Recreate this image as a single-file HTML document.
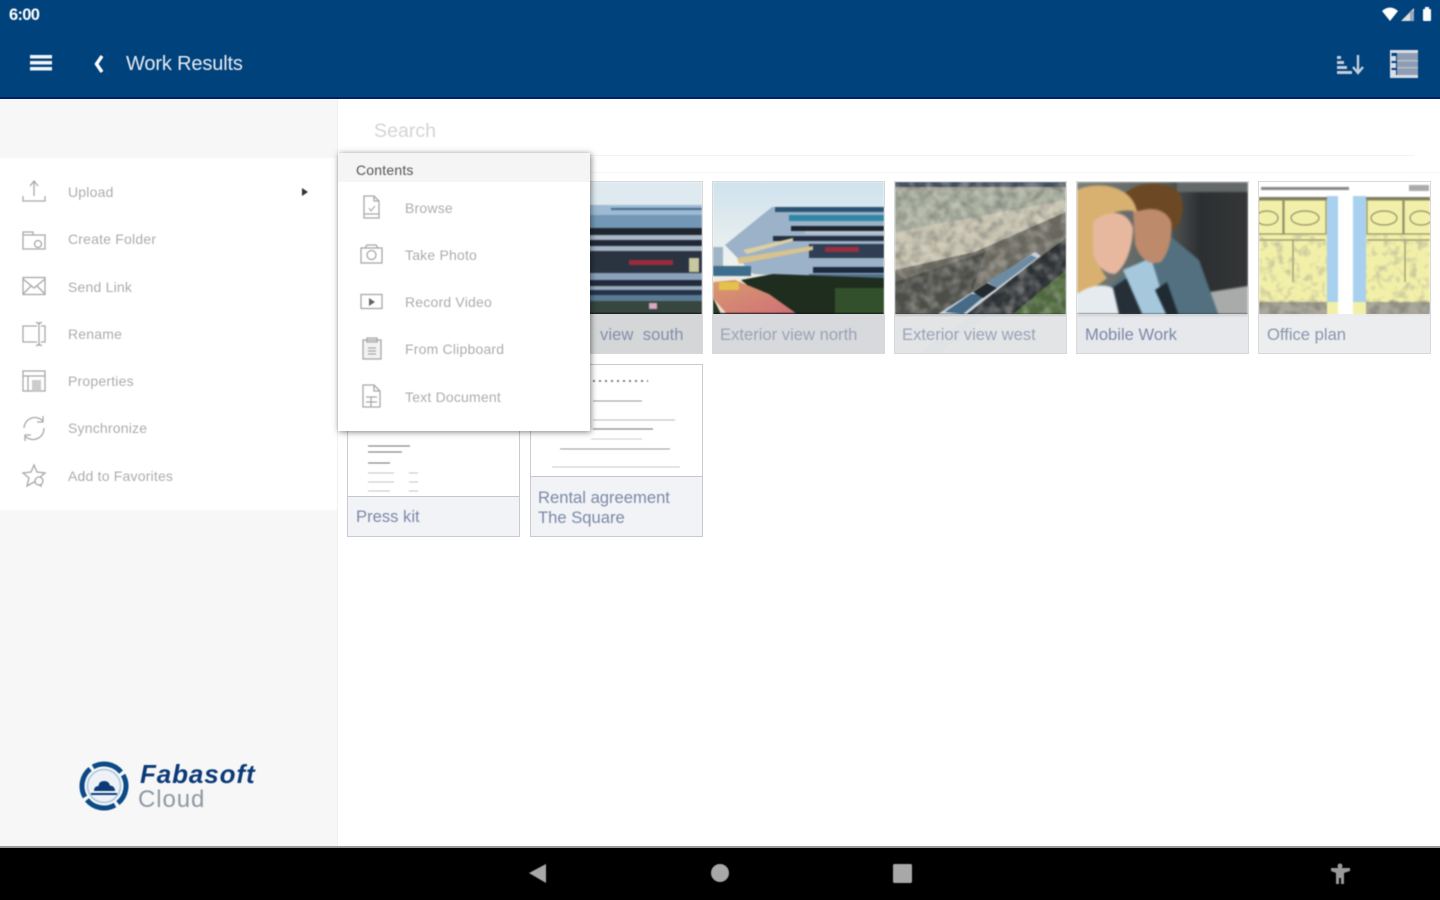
<!DOCTYPE html>
<html><head><meta charset="utf-8"><style>
html,body{margin:0;padding:0;width:1440px;height:900px;overflow:hidden;background:#fff;font-family:"Liberation Sans",sans-serif}
.a{position:absolute}
.t{position:absolute;white-space:nowrap;filter:blur(.5px)}
.m{font-size:14px;color:#adadad;line-height:16px;letter-spacing:.2px}
.c{font-size:16.6px;color:#7c89a8;line-height:20px;filter:blur(.55px)}
.card{position:absolute;width:171px;height:171px;border:1px solid #d6d8da;background:#fff;overflow:hidden}
.cap{position:absolute;left:0;right:0;bottom:0;height:39px;background:rgba(232,234,236,.86)}
svg{position:absolute;left:0;top:0;overflow:visible}
</style></head><body>
<svg width="0" height="0"><defs>
<filter id="nd" x="0" y="0" width="100%" height="100%"><feTurbulence type="fractalNoise" baseFrequency=".1" numOctaves="2" seed="7"/><feColorMatrix values="0 0 0 0 .1  0 0 0 0 .1  0 0 0 0 .1  2.6 0 0 0 -1"/></filter>
<filter id="nl" x="0" y="0" width="100%" height="100%"><feTurbulence type="fractalNoise" baseFrequency=".09" numOctaves="2" seed="21"/><feColorMatrix values="0 0 0 0 .9  0 0 0 0 .88  0 0 0 0 .8  2.6 0 0 0 -1"/></filter>
<filter id="np" x="0" y="0" width="100%" height="100%"><feTurbulence type="fractalNoise" baseFrequency=".12" numOctaves="2" seed="4"/><feColorMatrix values="0 0 0 0 .42  0 0 0 0 .42  0 0 0 0 .3  3 0 0 0 -1.4"/></filter>
</defs></svg>
<div class="a" style="left:0;top:0;width:1440px;height:97px;background:#00427c"></div>
<div class="a" style="left:0;top:97px;width:1440px;height:2px;background:#001f66"></div>
<div class="a" style="left:0;top:99px;width:337px;height:748px;background:#f7f7f7"></div>
<div class="a" style="left:0;top:158px;width:337px;height:352px;background:#fff"></div>
<div class="a" style="left:337px;top:99px;width:1px;height:748px;background:#f0f0f0"></div>
<div class="a" style="left:0;top:847px;width:1440px;height:53px;background:#000"></div>
<div class="a" style="left:0;top:846px;width:1440px;height:2px;background:#999"></div>
<div class="t" style="left:9px;top:6px;font-size:16.500px;line-height:18px;color:#fff;font-weight:bold;letter-spacing:-.7px">6:00</div>
<div class="t" style="left:126px;top:53px;font-size:20px;line-height:23px;color:#e6ebf2;letter-spacing:-.15px">Work Results</div>
<div class="t" style="left:374px;top:120px;font-size:19.600px;line-height:23px;color:#d4d4d4">Search</div>
<div class="a" style="left:590px;top:155px;width:825px;height:1px;background:#f2f2f2"></div>
<div class="a" style="left:590px;top:172px;width:850px;height:1px;background:#f4f4f4"></div>

<div class="t m" style="left:68px;top:184px">Upload</div>
<div class="t m" style="left:68px;top:231px">Create Folder</div>
<div class="t m" style="left:68px;top:279px">Send Link</div>
<div class="t m" style="left:68px;top:326px">Rename</div>
<div class="t m" style="left:68px;top:373px">Properties</div>
<div class="t m" style="left:68px;top:420px">Synchronize</div>
<div class="t m" style="left:68px;top:468px">Add to Favorites</div>

<!-- Card 1 -->
<div class="card" style="left:530px;top:181px"><svg width="171" height="171" style="filter:blur(.7px)">
<rect width="171" height="171" fill="#dfe9f0"/>
<rect y="23" width="171" height="10" fill="#9dbad2"/><rect y="26" x="80" width="91" height="2" fill="#456a8d"/>
<rect y="33" width="171" height="13" fill="#7298b6"/>
<rect y="46" width="171" height="7" fill="#20262f"/><rect y="53" width="171" height="5" fill="#aab8c8"/>
<rect y="58" width="171" height="6" fill="#1f2835"/><rect y="64" width="171" height="5" fill="#a6b4c4"/>
<rect y="69" width="171" height="22" fill="#2a3441"/><rect x="98" y="78" width="44" height="5" fill="#9a2c3a"/>
<rect x="158" y="76" width="10" height="14" fill="#c9c79e"/>
<rect y="91" width="171" height="7" fill="#8ba2ba"/>
<rect y="98" width="171" height="6" fill="#1f2b3c"/><rect y="104" width="171" height="4" fill="#9aa9b9"/>
<rect y="108" width="171" height="5" fill="#22324a"/><rect y="113" width="171" height="6" fill="#5a7b94"/>
<rect y="119" width="171" height="12" fill="#37463f"/><rect x="118" y="121" width="8" height="6" fill="#d8a9c0"/>
<rect y="131" width="171" height="2" fill="#111"/>
</svg><div class="cap" style="background:#d4d6d8"></div></div>
<div class="t c" style="left:600px;top:325px;color:#8390aa;letter-spacing:.05px">view&nbsp; south</div>

<!-- Card 2 -->
<div class="card" style="left:712px;top:181px"><svg width="171" height="171" style="filter:blur(.7px)">
<defs><linearGradient id="s1" x1="0" y1="0" x2="0" y2="1"><stop offset="0" stop-color="#cfe2ee"/><stop offset=".6" stop-color="#eef1ee"/><stop offset="1" stop-color="#e9ddc6"/></linearGradient>
<linearGradient id="r1" x1="0" y1="0" x2="1" y2="1"><stop offset="0" stop-color="#d89a6e"/><stop offset="1" stop-color="#cf6f78"/></linearGradient></defs>
<rect width="171" height="132" fill="url(#s1)"/>
<rect x="0" y="65" width="10" height="25" fill="#9fb4c5"/>
<polygon points="12,63 59,25 171,25 171,100 40,92" fill="#9cb2c9"/>
<rect x="62" y="25" width="109" height="5" fill="#2a5473"/><rect x="76" y="33" width="95" height="6" fill="#2f86a6"/>
<rect x="78" y="44" width="93" height="5" fill="#1d2430"/><rect x="92" y="49" width="79" height="3" fill="#b9c4cf"/><rect x="60" y="54" width="111" height="5" fill="#243042"/>
<rect x="96" y="62" width="75" height="14" fill="#2f3e52"/><rect x="112" y="65" width="34" height="5" fill="#983040"/>
<rect x="100" y="85" width="71" height="6" fill="#1c2a40"/><rect x="96" y="92" width="75" height="6" fill="#50708c"/>
<polygon points="24,76 100,64 100,68 26,82" fill="#d8c38c"/>
<polygon points="30,68 80,56 80,59 34,72" fill="#dcd0a0"/>
<rect x="0" y="84" width="38" height="10" fill="#3d6c8d"/>
<polygon points="28,98 60,92 171,96 171,132 70,132" fill="#1e2d1e"/><rect x="122" y="106" width="49" height="26" fill="#33502c"/>
<polygon points="0,100 22,98 56,112 84,132 14,132 0,116" fill="url(#r1)"/>
<rect x="6" y="100" width="20" height="8" fill="#e3c14a"/>
<polygon points="0,116 8,132 0,132" fill="#26381f"/>
<rect x="0" y="131" width="171" height="2" fill="#111"/>
</svg><div class="cap" style="background:#d7d9dc"></div></div>
<div class="t c" style="left:720px;top:325px;color:#9aa3b5">Exterior view north</div>

<!-- Card 3 -->
<div class="card" style="left:894px;top:181px"><svg width="171" height="171" style="filter:blur(.9px)">
<rect width="171" height="134" fill="#a5a594"/>
<rect width="171" height="5" fill="#3e4d60"/>
<polygon points="0,8 171,8 171,22 0,50" fill="#a9b09f"/>
<polygon points="0,50 171,18 171,42 80,88 0,88" fill="#c7c3b0"/>
<polygon points="0,88 80,70 171,30 171,60 110,132 0,132" fill="#6d6b61"/>
<polygon points="0,100 90,70 70,132 0,132" fill="#4c4d48"/>
<polygon points="100,108 171,56 171,132 70,132" fill="#2a2f33"/>
<polygon points="118,132 171,88 171,132" fill="#4d6a3a"/>
<rect width="171" height="132" filter="url(#nd)" opacity=".42"/>
<rect width="171" height="132" filter="url(#nl)" opacity=".3"/>
<polygon points="43,132 140,70 146,74 72,132" fill="#c9d3db"/>
<polygon points="50,130 76,112 92,112 68,132" fill="#476a86"/>
<polygon points="92,100 136,73 142,76 102,106" fill="#6d8ca3"/>
<polygon points="78,110 92,101 102,106 88,116" fill="#23282c"/>
<rect y="132" width="171" height="2" fill="#222"/>
<polygon points="24,171 76,134 92,134 44,171" fill="#eef0f2"/>
</svg><div class="cap" style="background:rgba(222,224,227,.88)"></div></div>
<div class="t c" style="left:902px;top:325px;color:#9aa3b8">Exterior view west</div>

<!-- Card 4 -->
<div class="card" style="left:1076px;top:181px"><svg width="171" height="171" style="filter:blur(1.1px)">
<defs><linearGradient id="b4" x1="0" y1="0" x2="1" y2="0"><stop offset="0" stop-color="#7a7f7c"/><stop offset=".5" stop-color="#59605e"/><stop offset=".72" stop-color="#2c2f31"/><stop offset="1" stop-color="#343637"/></linearGradient></defs>
<rect width="171" height="134" fill="url(#b4)"/>
<rect x="100" y="0" width="71" height="10" fill="#65696a"/>
<polygon points="120,112 171,104 171,134 140,134" fill="#a9abab"/>
<polygon points="26,110 60,82 92,53 122,78 142,134 26,134" fill="#52707f"/>
<polygon points="26,112 56,92 74,134 32,134" fill="#262f38"/>
<polygon points="46,88 74,76 92,134 66,134" fill="#a5c8dc"/>
<polygon points="78,108 90,100 102,134 90,134" fill="#1f2a33"/>
<path d="M56 28C60 22 90 22 94 36C96 56 92 70 84 80C72 84 62 76 58 62Z" fill="#bd8a6b"/>
<path d="M44 18C50-2 96-4 104 14C109 30 102 44 96 50C96 32 82 24 66 28C56 30 48 30 44 18Z" fill="#6d4824"/>
<path d="M0 8C22-2 56 4 60 30C48 26 30 30 20 42C14 62 20 84 30 96C20 104 8 112 0 116Z" fill="#d8b070"/>
<path d="M16 40C28 28 50 26 56 46C56 62 50 84 38 92C28 92 20 84 16 72Z" fill="#e8b89e"/>
<path d="M0 112C14 102 28 102 36 106L42 132H0Z" fill="#e6ebef"/>
<rect y="132" width="171" height="2" fill="#333"/>
<polygon points="90,171 150,134 171,134 171,171" fill="#fff" opacity=".5"/>
</svg><div class="cap" style="background:rgba(226,229,233,.88)"></div></div>
<div class="t c" style="left:1085px;top:325px">Mobile Work</div>

<!-- Card 5 -->
<div class="card" style="left:1258px;top:181px"><svg width="171" height="171" style="filter:blur(.8px)">
<rect width="171" height="171" fill="#fff"/>
<rect y="15" width="171" height="118" fill="#f2f0a8"/>
<rect y="15" width="171" height="3" fill="#7c7c60"/>
<rect x="68" y="14" width="39" height="106" fill="#a8d0ef"/><rect x="79" y="14" width="15" height="120" fill="#fff"/>
<rect x="2" y="5" width="88" height="3" fill="#888"/><rect x="150" y="3" width="20" height="6" fill="#aaa"/>
<g fill="none" stroke="#8e8e6a" stroke-width="1.200">
<rect x="-1" y="18" width="25" height="34"/><rect x="25" y="18" width="42" height="34"/><rect x="108" y="18" width="36" height="34"/><rect x="145" y="18" width="28" height="34"/>
<ellipse cx="8" cy="36" rx="11" ry="7"/><ellipse cx="46" cy="36" rx="14" ry="7"/><ellipse cx="125" cy="36" rx="13" ry="7"/><ellipse cx="162" cy="36" rx="11" ry="7"/>
<path d="M0 58H66M34 58V100M108 58H171M146 58V100"/>
</g>
<rect x="0" y="52" width="68" height="68" filter="url(#np)" opacity=".6"/>
<rect x="107" y="52" width="64" height="68" filter="url(#np)" opacity=".6"/>
<rect y="120" width="68" height="14" fill="#aba89b"/><rect x="107" y="120" width="64" height="14" fill="#aba89b"/>
<rect y="118" width="68" height="14" filter="url(#nd)" opacity=".4"/><rect x="107" y="118" width="64" height="14" filter="url(#nd)" opacity=".4"/>
</svg><div class="cap" style="background:rgba(234,236,238,.92)"></div></div>
<div class="t c" style="left:1267px;top:325px;color:#8a96ad">Office plan</div>

<!-- Card 6 -->
<div class="card" style="left:347px;top:364px;border-color:#c8cbd0"><svg width="171" height="171" style="filter:blur(.6px)">
<g fill="none">
<path d="M20 81H62M20 87H54" stroke="#888" stroke-width="1.300"/>
<path d="M20 98H42" stroke="#888" stroke-width="1.300"/>
<path d="M20 108H46M61 108H70M20 117H46M61 117H70M20 126H42M61 126H70" stroke="#c4c4c4" stroke-width="1.100"/></g>
</svg><div class="a" style="left:0;right:0;top:131px;height:1px;background:#c4c7cc"></div><div class="a" style="left:0;right:0;top:132px;bottom:0;background:#f1f3f6"></div></div>
<div class="t c" style="left:356px;top:507px">Press kit</div>

<!-- Card 7 -->
<div class="card" style="left:530px;top:364px;border-color:#c8cbd0"><svg width="171" height="171" style="filter:blur(.6px)">
<g fill="none">
<path d="M62 16H117" stroke="#555" stroke-width="1.600" stroke-dasharray="2 4"/>
<path d="M62 36H111" stroke="#999" stroke-width="1.100"/>
<path d="M62 55H144" stroke="#bbb" stroke-width="1"/>
<path d="M62 64H122" stroke="#888" stroke-width="1.200"/>
<path d="M60 74H111" stroke="#d0d0d0" stroke-width="1"/>
<path d="M29 84H139" stroke="#999" stroke-width="1"/>
<path d="M21 102H149" stroke="#cacaca" stroke-width="1"/>
</g>
</svg><div class="a" style="left:0;right:0;top:111px;height:1px;background:#c4c7cc"></div><div class="a" style="left:0;right:0;top:112px;bottom:0;background:#f1f3f6"></div></div>
<div class="t c" style="left:538px;top:488px;line-height:20px">Rental agreement<br>The Square</div>

<!-- Popup -->
<div class="a" style="left:338px;top:153px;width:252px;height:278px;background:#fff;box-shadow:1px 1px 6px rgba(0,0,0,.5)"></div>
<div class="a" style="left:338px;top:153px;width:252px;height:29px;background:#f5f5f5"></div>
<div class="t" style="left:356px;top:162px;font-size:14px;line-height:16px;color:#555;letter-spacing:.2px">Contents</div>
<div class="t m" style="left:405px;top:200px">Browse</div>
<div class="t m" style="left:405px;top:247px">Take Photo</div>
<div class="t m" style="left:405px;top:294px">Record Video</div>
<div class="t m" style="left:405px;top:341px">From Clipboard</div>
<div class="t m" style="left:405px;top:389px">Text Document</div>

<!-- Logo -->
<div class="t" style="left:140px;top:760px;font-size:26px;line-height:28px;font-weight:bold;font-style:italic;color:#0c3a78;letter-spacing:.9px">Fabasoft</div>
<div class="t" style="left:138px;top:786px;font-size:24px;line-height:27px;color:#8f98a4;letter-spacing:.9px">Cloud</div>

<svg width="1440" height="900" style="filter:blur(.45px)">
<!-- header -->
<g fill="#f2f4f8"><rect x="30" y="55" width="22" height="3.500"/><rect x="30" y="61" width="22" height="3.500"/><rect x="30" y="67" width="22" height="3.500"/></g>
<path d="M102 56L96.500 64L102 72" fill="none" stroke="#fff" stroke-width="3.400"/>
<g fill="#c4cedb"><rect x="1337" y="56" width="4" height="3"/><rect x="1337" y="61" width="7" height="3"/><rect x="1337" y="66" width="10" height="3"/><rect x="1337" y="71" width="15" height="3"/></g>
<path d="M1358 55V72M1353 67L1358 73L1363 67" fill="none" stroke="#c4cedb" stroke-width="2.400"/>
<rect x="1397" y="51" width="21" height="26" fill="#8f9db4"/>
<g fill="#d8dde6"><rect x="1390" y="50" width="28" height="3"/><rect x="1390" y="75" width="28" height="3"/><rect x="1391" y="56" width="5" height="5"/><rect x="1391" y="63" width="5" height="5"/><rect x="1391" y="70" width="5" height="5"/><rect x="1390" y="53" width="1.500" height="23"/></g>
<g fill="#b4becd"><rect x="1397" y="60" width="21" height="1.500"/><rect x="1397" y="67" width="21" height="1.500"/></g>
<path d="M1382 11Q1390 4 1398 11L1390 21Z" fill="#fff"/>
<path d="M1414 8V21H1401Z" fill="#ddd"/><rect x="1410" y="11" width="4" height="10" fill="#9aa8bd"/>
<rect x="1423" y="9" width="8" height="12" rx="1" fill="#fff"/><rect x="1425" y="7" width="4" height="2" fill="#fff"/>
<!-- sidebar icons -->
<g fill="none" stroke="#a8a8a8" stroke-width="1.300">
<path d="M23 196V201H45V196M34 196V182M30 186L34 181L38 186"/>
<path d="M23 232H33V235H45V249H23ZM23 235H33"/><circle cx="38" cy="244" r="3.500"/>
<rect x="23" y="277.500" width="22" height="17"/><path d="M23 279L34 288L45 279M23 294L31 286M45 294L37 286"/>
<path d="M37 326H23V342H37M41 326H45V342H41M39 322V346M36 322L39 324L42 322M36 346L39 344L42 346"/>
<rect x="23" y="371" width="22" height="20"/><path d="M23 376H45M28 376V391"/><rect x="32" y="380" width="9" height="11" fill="#ccc" stroke="none"/>
<path d="M24 428A11 11 0 0 1 43 421M44 428A11 11 0 0 1 25 436M43 416V422H37M25 441V435H31"/>
<path d="M34 465L37 472L45 473L39 478L41 486L34 482L27 486L29 478L23 473L31 472Z"/><circle cx="39" cy="481" r="4" fill="#fff"/>
</g>
<path d="M302 188L308 192L302 196Z" fill="#333"/>
<!-- popup icons -->
<g fill="none" stroke="#a8a8a8" stroke-width="1.300">
<path d="M364 196H374L379 201V218H364ZM374 196V201H379M364 214H379"/><path d="M369 208L371 211L375 206" stroke-width="1.100"/>
<rect x="361" y="248" width="21" height="15"/><circle cx="371.500" cy="255" r="4.500"/><path d="M365 248L367 245H376L378 248"/>
<rect x="361" y="294.500" width="21" height="14"/><path d="M369 298L375 302L369 306Z" fill="#666" stroke="none"/>
<rect x="363" y="340" width="18" height="19" fill="#f2f2f2"/><path d="M367 338H377V342H367ZM368 348H376M368 351H376M368 354H376"/>
<path d="M363 385H374L380 391V407H363ZM374 385V391H380M366 397H377M366 402H377M371 397V407"/>
</g>
<!-- Logo icon -->
<circle cx="104" cy="786" r="16.500" fill="#eef2f6" stroke="#a9c4dc" stroke-width="1.500"/>
<circle cx="104" cy="786" r="22" fill="none" stroke="#0c4a86" stroke-width="5" stroke-dasharray="31 3.500" transform="rotate(-30 104 786)"/>
<path d="M94 791Q94 786 98.500 786Q99 781 104 781Q109 781 110 785.500Q115 786 115 791Z" fill="#0c3a78"/>
<rect x="91" y="793" width="26" height="2" fill="#0c3a78"/>
<!-- navbar -->
<path d="M529 873L546 864V883Z" fill="#a8a8a8"/>
<circle cx="720" cy="873" r="9" fill="#a8a8a8"/>
<rect x="893" y="864" width="19" height="19" rx="1.500" fill="#a8a8a8"/>
<g fill="#9a9a9a"><circle cx="1340" cy="866" r="2.500"/><path d="M1331 868L1350 868L1350 871L1344 873V884H1341V878H1339V884H1336V873L1331 871Z"/></g>
</svg>
</body></html>
